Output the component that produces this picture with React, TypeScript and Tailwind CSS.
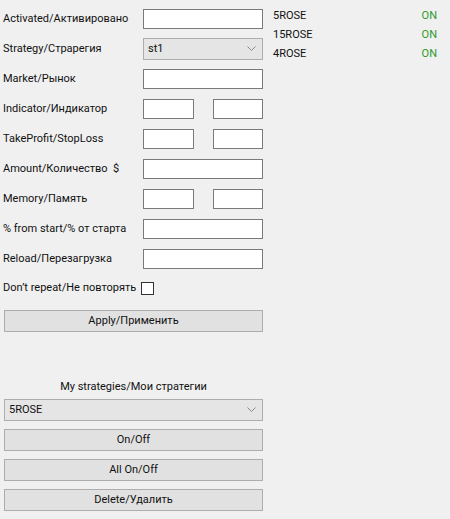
import React from 'react'

const font = { fontFamily: 'Roboto, "Liberation Sans", sans-serif' }

function TextBox({ w = 'w-[120px]' }: { w?: string }) {
  return <div className={`${w} h-[20px] shrink-0 bg-white border border-[#7a7a7a]`} />
}

function Select({ value, w }: { value: string; w: string }) {
  return (
    <div
      className={`${w} h-[22px] shrink-0 bg-[#e5e5e5] border border-[#adadad] flex items-center justify-between pl-[4px] pr-[6px]`}
    >
      <span>{value}</span>
      <svg width="9" height="6" viewBox="0 0 9 6" fill="none" stroke="#888" strokeWidth="1">
        <polyline points="0.5 0.5 4.5 4.5 8.5 0.5" />
      </svg>
    </div>
  )
}

function Button({ label }: { label: string }) {
  return (
    <div className="w-[259px] h-[22px] bg-[#e1e1e1] border border-[#adadad] flex items-center justify-center">
      {label}
    </div>
  )
}

function Row({ label, children }: { label: string; children: React.ReactNode }) {
  return (
    <div className="h-[30px] flex items-center">
      <span className="w-[143px] shrink-0 pl-[3px] whitespace-pre">{label}</span>
      {children}
    </div>
  )
}

function Pair() {
  return (
    <div className="flex gap-[19px]">
      <TextBox w="w-[51px]" />
      <TextBox w="w-[50px]" />
    </div>
  )
}

const strategies = ['5ROSE', '15ROSE', '4ROSE']

export default function App() {
  return (
    <div
      className="w-[450px] h-[519px] bg-[#f0f0f0] text-[11px] text-[#111] flex"
      style={font}
    >
      <div className="w-[270px] flex flex-col pt-[4px]">
        <Row label="Activated/Активировано"><TextBox /></Row>
        <Row label="Strategy/Страрегия"><Select value="st1" w="w-[120px]" /></Row>
        <Row label="Market/Рынок"><TextBox /></Row>
        <Row label="Indicator/Индикатор"><Pair /></Row>
        <Row label="TakeProfit/StopLoss"><Pair /></Row>
        <Row label="Amount/Количество  $"><TextBox /></Row>
        <Row label="Memory/Память"><Pair /></Row>
        <Row label="% from start/% от старта"><TextBox /></Row>
        <Row label="Reload/Перезагрузка"><TextBox /></Row>

        {/* checkbox row */}
        <div className="h-[28px] flex items-center pl-[3px]">
          <span className="whitespace-pre">Don’t repeat/Не повторять</span>
          <div className="w-[13px] h-[13px] bg-white border border-[#333] ml-[5px]" />
        </div>

        <div className="pl-[4px] mt-[8px]">
          <Button label="Apply/Применить" />
        </div>

        <div className="w-[267px] h-[16px] leading-[16px] text-center mt-[47px]">
          My strategies/Мои стратегии
        </div>

        <div className="pl-[4px] mt-[4px] flex flex-col gap-[8px]">
          <Select value="5ROSE" w="w-[259px]" />
          <Button label="On/Off" />
          <Button label="All On/Off" />
          <Button label="Delete/Удалить" />
        </div>
      </div>

      {/* strategy status list */}
      <div className="w-[167px] pl-[3px] pt-[7px] flex flex-col">
        {strategies.map((s) => (
          <div key={s} className="h-[19px] flex items-center justify-between">
            <span>{s}</span>
            <span className="text-[#2e9a2e]">ON</span>
          </div>
        ))}
      </div>
    </div>
  )
}
